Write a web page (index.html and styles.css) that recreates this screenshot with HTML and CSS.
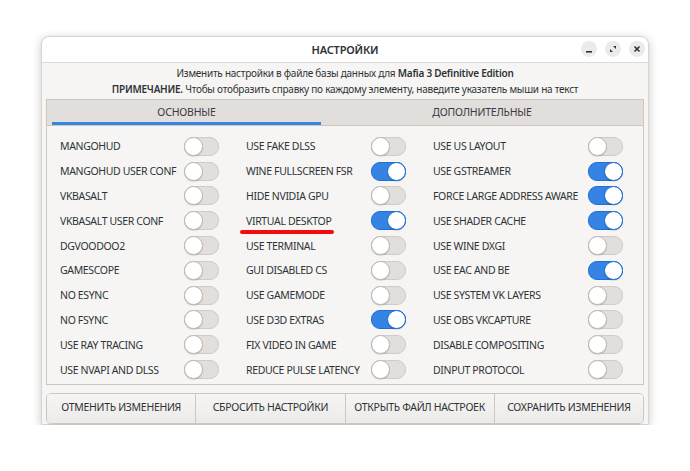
FILE: index.html
```html
<!DOCTYPE html>
<html lang="ru">
<head>
    <meta charset="UTF-8">
    <title>Настройки</title>
    <link rel="stylesheet" href="styles.css">
</head>
<body>
    <div class="window">
        <div class="headerbar">
            <span class="title">НАСТРОЙКИ</span>
            <div class="wm-buttons">
                <span class="wm-btn">
                    <svg width="8" height="8" viewBox="0 0 8 8"><rect x="1" y="6" width="6" height="1.6" fill="#2e3436"/></svg>
                </span>
                <span class="wm-btn">
                    <svg width="8" height="8" viewBox="0 0 8 8"><path d="M4 1h3v3zM1 4v3h3z" fill="#2e3436"/></svg>
                </span>
                <span class="wm-btn">
                    <svg width="8" height="8" viewBox="0 0 8 8"><path d="M1.5 1.5l5 5M6.5 1.5l-5 5" stroke="#2e3436" stroke-width="1.6"/></svg>
                </span>
            </div>
        </div>

        <div class="content">
            <div class="info">
                <div>Изменить настройки в файле базы данных для <b>Mafia 3 Definitive Edition</b></div>
                <div><b>ПРИМЕЧАНИЕ.</b> Чтобы отобразить справку по каждому элементу, наведите указатель мыши на текст</div>
            </div>

            <div class="notebook">
                <div class="tabs">
                    <div class="tab active">ОСНОВНЫЕ</div>
                    <div class="tab">ДОПОЛНИТЕЛЬНЫЕ</div>
                </div>
                <div class="page">
                    <div class="column">
                        <div class="row"><span>MANGOHUD</span><span class="switch"></span></div>
                        <div class="row"><span>MANGOHUD USER CONF</span><span class="switch"></span></div>
                        <div class="row"><span>VKBASALT</span><span class="switch"></span></div>
                        <div class="row"><span>VKBASALT USER CONF</span><span class="switch"></span></div>
                        <div class="row"><span>DGVOODOO2</span><span class="switch"></span></div>
                        <div class="row"><span>GAMESCOPE</span><span class="switch"></span></div>
                        <div class="row"><span>NO ESYNC</span><span class="switch"></span></div>
                        <div class="row"><span>NO FSYNC</span><span class="switch"></span></div>
                        <div class="row"><span>USE RAY TRACING</span><span class="switch"></span></div>
                        <div class="row"><span>USE NVAPI AND DLSS</span><span class="switch"></span></div>
                    </div>
                    <div class="column">
                        <div class="row"><span>USE FAKE DLSS</span><span class="switch"></span></div>
                        <div class="row"><span>WINE FULLSCREEN FSR</span><span class="switch on"></span></div>
                        <div class="row"><span>HIDE NVIDIA GPU</span><span class="switch"></span></div>
                        <div class="row"><span class="marked">VIRTUAL DESKTOP</span><span class="switch on"></span></div>
                        <div class="row"><span>USE TERMINAL</span><span class="switch"></span></div>
                        <div class="row"><span>GUI DISABLED CS</span><span class="switch"></span></div>
                        <div class="row"><span>USE GAMEMODE</span><span class="switch"></span></div>
                        <div class="row"><span>USE D3D EXTRAS</span><span class="switch on"></span></div>
                        <div class="row"><span>FIX VIDEO IN GAME</span><span class="switch"></span></div>
                        <div class="row"><span>REDUCE PULSE LATENCY</span><span class="switch"></span></div>
                    </div>
                    <div class="column wide">
                        <div class="row"><span>USE US LAYOUT</span><span class="switch"></span></div>
                        <div class="row"><span>USE GSTREAMER</span><span class="switch on"></span></div>
                        <div class="row"><span>FORCE LARGE ADDRESS AWARE</span><span class="switch on"></span></div>
                        <div class="row"><span>USE SHADER CACHE</span><span class="switch on"></span></div>
                        <div class="row"><span>USE WINE DXGI</span><span class="switch"></span></div>
                        <div class="row"><span>USE EAC AND BE</span><span class="switch on"></span></div>
                        <div class="row"><span>USE SYSTEM VK LAYERS</span><span class="switch"></span></div>
                        <div class="row"><span>USE OBS VKCAPTURE</span><span class="switch"></span></div>
                        <div class="row"><span>DISABLE COMPOSITING</span><span class="switch"></span></div>
                        <div class="row"><span>DINPUT PROTOCOL</span><span class="switch"></span></div>
                    </div>
                </div>
            </div>

            <div class="buttons">
                <button>ОТМЕНИТЬ ИЗМЕНЕНИЯ</button>
                <button>СБРОСИТЬ НАСТРОЙКИ</button>
                <button>ОТКРЫТЬ ФАЙЛ НАСТРОЕК</button>
                <button>СОХРАНИТЬ ИЗМЕНЕНИЯ</button>
            </div>
        </div>
    </div>
</body>
</html>
```

FILE: styles.css
```css
body {
    margin: 0;
    background: #ffffff;
    padding: 36px 41px 0 41px;
    font-family: "Noto Sans", "DejaVu Sans", sans-serif;
    font-size: 10.5px;
    color: #2e3436;
}

.window {
    width: 608px;
    height: 389px;
    box-sizing: border-box;
    background: #f6f5f4;
    border: 1px solid #d8d4d0;
    border-radius: 8px 8px 0 0;
    box-shadow: 0 2px 10px rgba(0, 0, 0, 0.22);
    display: flex;
    flex-direction: column;
}

.headerbar {
    height: 25px;
    flex: none;
    background: #ffffff;
    border-bottom: 1px solid #dedbd8;
    border-radius: 8px 8px 0 0;
    display: flex;
    align-items: center;
    justify-content: center;
    position: relative;
}

.title {
    font-size: 11px;
    font-weight: 600;
    letter-spacing: -0.2px;
}

.wm-buttons {
    position: absolute;
    right: 3px;
    top: 4px;
    display: flex;
    gap: 8px;
}

.wm-btn {
    width: 16px;
    height: 16px;
    border-radius: 50%;
    background: #ebebeb;
    display: flex;
    align-items: center;
    justify-content: center;
}

.content {
    flex: 1;
    display: flex;
    flex-direction: column;
    padding: 2px 4px 0 4px;
}

.info {
    text-align: center;
    font-size: 10px;
    line-height: 16px;
    letter-spacing: -0.25px;
    margin-bottom: 2px;
}

.info b {
    font-weight: 600;
}

.notebook {
    height: 286px;
    box-sizing: border-box;
    border: 1px solid #cdc7c2;
    background: #f6f5f4;
    display: flex;
    flex-direction: column;
}

.tabs {
    height: 25px;
    flex: none;
    background: #e1dedb;
    border-bottom: 1px solid #cdc7c2;
    display: flex;
}

.tab {
    display: flex;
    align-items: center;
    justify-content: center;
    flex: 1;
    font-size: 10.5px;
    letter-spacing: -0.2px;
    color: #3d3846;
    box-sizing: border-box;
    padding-bottom: 1px;
}

.tab.active {
    flex: none;
    width: 269px;
    margin-left: 5px;
    border-bottom: 3px solid #3584e4;
    padding: 1px 0 0 0;
}

.page {
    display: flex;
    gap: 27px;
    padding: 8px 0 0 13px;
}

.column {
    width: 159px;
    display: flex;
    flex-direction: column;
}

.column + .column {
    width: 160px;
}

.column.wide {
    width: 190px;
}

.row {
    height: 24.8px;
    display: flex;
    align-items: center;
    justify-content: space-between;
    white-space: nowrap;
    letter-spacing: -0.35px;
}

.marked {
    position: relative;
}

.marked::after {
    content: "";
    position: absolute;
    left: -6px;
    width: 94px;
    top: 16px;
    height: 4px;
    border-radius: 2px;
    background: #f20d0d;
}

.switch {
    width: 33px;
    height: 17px;
    flex: none;
    border-radius: 9px;
    background: #e1dedb;
    border: 1px solid #d0cbc6;
    position: relative;
}

.switch::after {
    content: "";
    position: absolute;
    top: -1px;
    left: -1px;
    width: 17px;
    height: 17px;
    border-radius: 50%;
    background: #ffffff;
    border: 1px solid #bfb8b1;
    box-shadow: 0 1px 1px rgba(0, 0, 0, 0.12);
}

.switch.on {
    background: #3584e4;
    border-color: #1c6fd6;
}

.switch.on::after {
    left: auto;
    right: -1px;
    border-color: #1c6fd6;
}

.buttons {
    margin-top: 8px;
    display: flex;
    border: 1px solid #cdc7c2;
    border-radius: 5px;
    overflow: hidden;
    box-shadow: 0 1px 1px rgba(0, 0, 0, 0.07);
}

.buttons button {
    flex: 1;
    height: 29px;
    border: none;
    border-left: 1px solid #cdc7c2;
    background: linear-gradient(#f6f5f4, #edebe9);
    font-family: inherit;
    font-size: 10.5px;
    letter-spacing: -0.3px;
    color: #2e3436;
    padding: 0 0 3px 0;
}

.buttons button:first-child {
    border-left: none;
}
```
